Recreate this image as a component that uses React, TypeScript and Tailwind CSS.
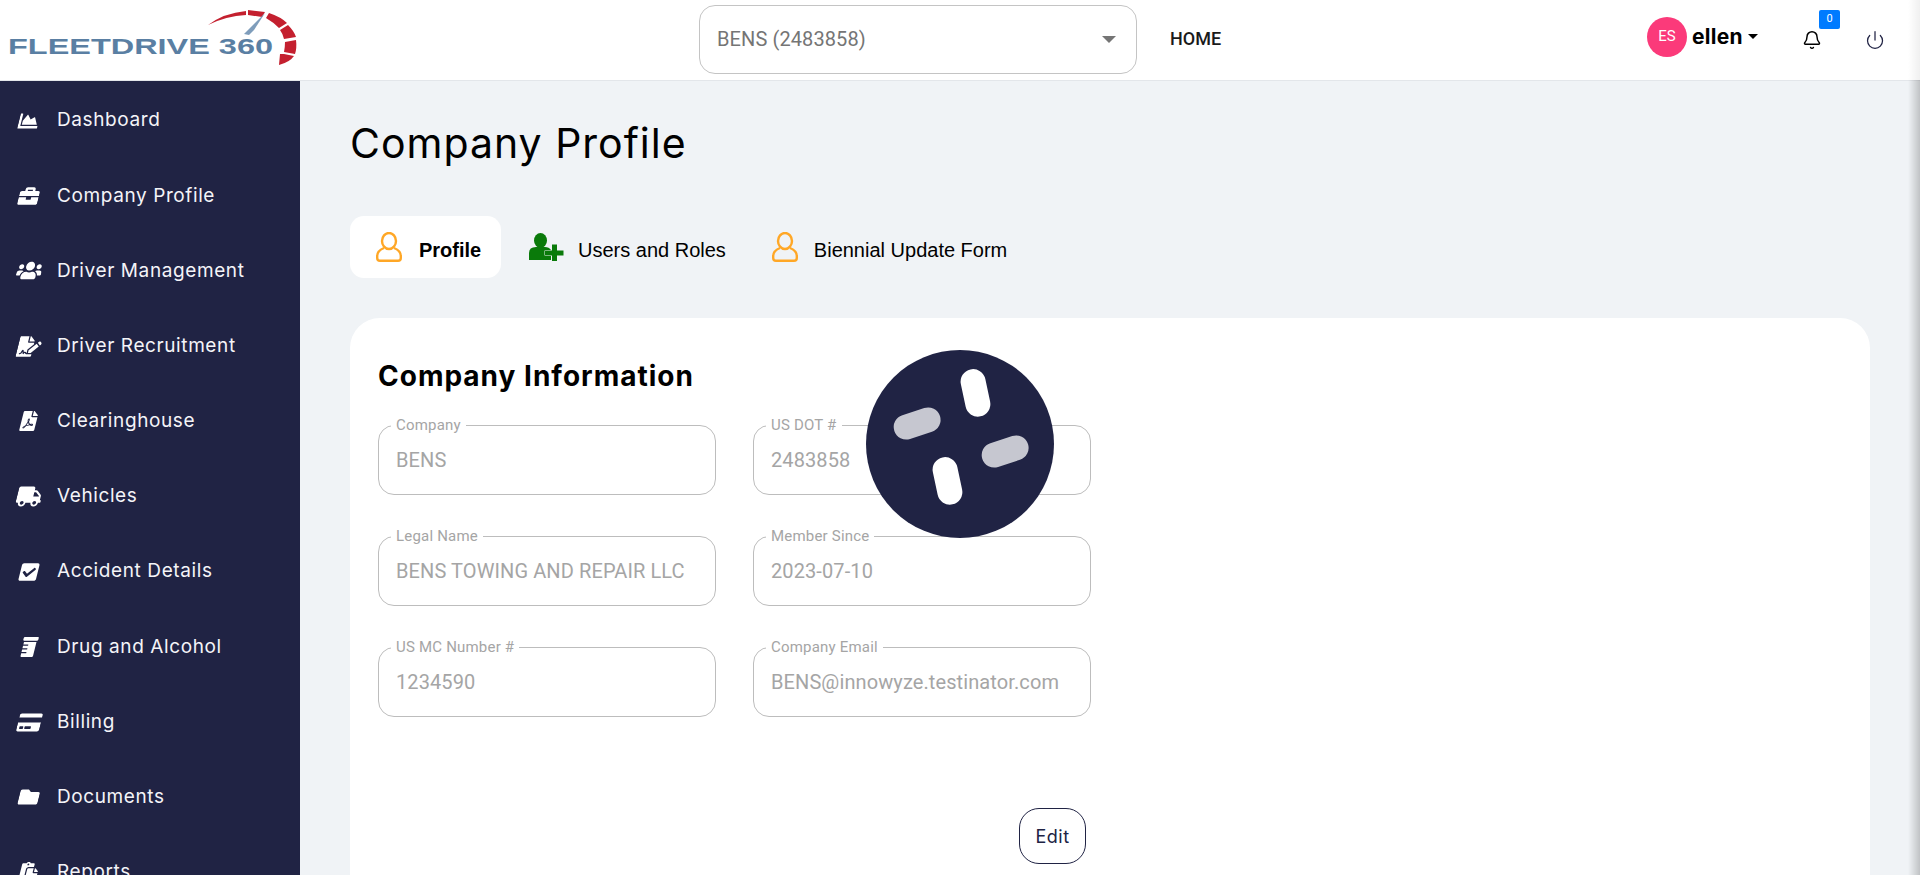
import { FaChartArea, FaBriefcase, FaUsers, FaFileSignature, FaFilePdf, FaTruck, FaCheckSquare, FaPrescriptionBottle, FaCreditCard, FaFolder, FaPaste } from "react-icons/fa";
import { Bell, Power } from "lucide-react";

// size: FontAwesome glyphs are fitted to the box, so wide ones need a bigger box
const navItems = [
  { label: "Dashboard", icon: FaChartArea, size: 20 },
  { label: "Company Profile", icon: FaBriefcase, size: 20 },
  { label: "Driver Management", icon: FaUsers, size: 25 },
  { label: "Driver Recruitment", icon: FaFileSignature, size: 23 },
  { label: "Clearinghouse", icon: FaFilePdf, size: 20 },
  { label: "Vehicles", icon: FaTruck, size: 25 },
  { label: "Accident Details", icon: FaCheckSquare, size: 20 },
  { label: "Drug and Alcohol", icon: FaPrescriptionBottle, size: 20 },
  { label: "Billing", icon: FaCreditCard, size: 23 },
  { label: "Documents", icon: FaFolder, size: 20 },
  { label: "Reports", icon: FaPaste, size: 20 },
];

const fields = [
  { label: "Company", value: "BENS" },
  { label: "US DOT #", value: "2483858" },
  { label: "Legal Name", value: "BENS TOWING AND REPAIR LLC" },
  { label: "Member Since", value: "2023-07-10" },
  { label: "US MC Number #", value: "1234590" },
  { label: "Company Email", value: "BENS@innowyze.testinator.com" },
];

function Logo() {
  return (
    <svg width="300" height="80" viewBox="0 0 300 80" className="shrink-0">
      <text x="8" y="54" textLength="265" lengthAdjust="spacingAndGlyphs" fontFamily="'Liberation Sans', sans-serif" fontWeight="700" fontSize="22" fill="#5a7fa3">
        FLEETDRIVE 360
      </text>
      <path d="M208 25 Q224 13 246 11 L246 15 Q226 16 208 25Z" fill="#c4202f" />
      <path d="M248 10 L265 12 L262 17 L248 15Z" fill="#c4202f" />
      <path d="M269 13 Q281 17 287 23 L279 28 Q273 22 266 18Z" fill="#c4202f" />
      <path d="M288 25 Q294 31 296 37 L284 39 Q283 34 280 30Z" fill="#c4202f" />
      <path d="M296 40 Q297 48 295 54 L284 52 Q285 47 285 42Z" fill="#c4202f" />
      <path d="M294 56 Q290 62 279 65 L280 54 L284 54Z" fill="#c4202f" />
      <path d="M244 34 L265 13 L254 30 L249 35Z" fill="#7f9dbb" />
    </svg>
  );
}

function PersonOutline() {
  return (
    <svg width="26" height="30" viewBox="0 0 26 30" fill="none" stroke="#ffa726" strokeWidth="2.4" className="shrink-0">
      <ellipse cx="13" cy="9" rx="7" ry="8" />
      <path d="M8 16 C3 18 1.2 20 1.2 24 V26 Q1.2 28.8 4 28.8 H22 Q24.8 28.8 24.8 26 V24 C24.8 20 23 18 18 16" />
    </svg>
  );
}

function PersonPlus() {
  return (
    <svg width="36" height="28" viewBox="0 0 36 28" fill="#0a7a0a" className="shrink-0">
      <ellipse cx="12.5" cy="7.5" rx="6.5" ry="7.5" />
      <path d="M1 27 V20 Q1 14 8 14 H17 Q21 14 23 17 V27 Z" />
      <path d="M17 17.5 H24 V11.5 H29 V17.5 H35.5 V22.5 H29 V28 H24 V22.5 H17 Z" stroke="#f0f3f6" strokeWidth="1" paintOrder="stroke" />
    </svg>
  );
}

function Spinner() {
  return (
    <svg width="188" height="188" viewBox="0 0 188 188" className="absolute left-[866px] top-[350px]">
      <circle cx="94" cy="94" r="94" fill="#202344" />
      <rect x="-12" y="-24" width="25" height="48" rx="12.5" fill="#fff" transform="translate(109 43) rotate(-12)" />
      <rect x="-12" y="-24" width="25" height="48" rx="12.5" fill="#fff" transform="translate(81 131) rotate(-12)" />
      <rect x="-24" y="-12" width="48" height="25" rx="12.5" fill="#c6c7d0" transform="translate(51 73) rotate(-18)" />
      <rect x="-24" y="-12" width="48" height="25" rx="12.5" fill="#c6c7d0" transform="translate(139 101) rotate(-18)" />
    </svg>
  );
}

export default function App() {
  return (
    <div className="relative h-[875px] overflow-hidden bg-[#f0f3f6] font-['Inter',sans-serif]">
      <header className="flex h-[81px] items-center border-b border-[#e3e6ea] bg-white">
        <Logo />
        <div className="mb-[2px] ml-[399px] flex h-[69px] w-[438px] items-center justify-between rounded-[16px] border border-[#c4c4c4] pl-[17px] pr-[20px] font-['Roboto',sans-serif] text-[20px] tracking-[0.1px] text-[#757575]">
          <span>BENS (2483858)</span>
          <span className="h-0 w-0 border-x-[7px] border-t-[7px] border-x-transparent border-t-[#757575]" />
        </div>
        <span className="mb-[4px] ml-[33px] font-['Roboto',sans-serif] text-[18px] font-medium text-[#1a1a1a]">HOME</span>
        <div className="ml-auto flex items-center pr-[35px]">
          <div className="mb-[7px] flex items-center">
            <span className="flex h-[40px] w-[40px] items-center justify-center rounded-full bg-[#fb3a7a] font-['Roboto',sans-serif] text-[15px] text-white">ES</span>
            <span className="ml-[5px] text-[21px] font-bold tracking-[0.3px] text-black">ellen</span>
            <span className="ml-[5px] h-0 w-0 border-x-[5px] border-t-[5px] border-x-transparent border-t-black" />
          </div>
          <div className="relative ml-[44px]">
            <Bell size={20} strokeWidth={1.75} className="text-black" />
            <span className="absolute -top-[20px] left-[17px] flex h-[19px] w-[21px] items-center justify-center rounded-[2px] bg-[#007bff] font-['Roboto',sans-serif] text-[11px] text-white">0</span>
          </div>
          <Power size={20} strokeWidth={1.5} className="ml-[43px] text-[#202344]" />
        </div>
      </header>

      <div className="flex">
        <aside className="h-[794px] w-[300px] shrink-0 overflow-hidden bg-[#202344] pt-[2px] text-white">
          {navItems.map((item) => (
            <div key={item.label} className="flex h-[75.2px] items-center pl-[17px]">
              <span className="mr-[16px] flex w-[24px] shrink-0 justify-center">
                <item.icon size={item.size} className="shrink-0 skew-x-[-14deg]" />
              </span>
              <span className="text-[19px] tracking-[0.6px] text-[#f4f4f8]">{item.label}</span>
            </div>
          ))}
        </aside>

        <main className="min-w-0 flex-1 px-[50px]">
          <h1 className="mt-[38px] text-[41px] leading-[48px] tracking-[1px] text-black">Company Profile</h1>
          <div className="mt-[49px] flex h-[62px] items-center font-['Liberation_Sans',sans-serif] text-[20px] text-black">
            <div className="flex h-[62px] w-[151px] items-center gap-[17px] rounded-[14px] bg-white pl-[26px] font-bold">
              <PersonOutline />
              <span className="pt-[6px]">Profile</span>
            </div>
            <div className="ml-[27px] flex items-center gap-[14px]">
              <PersonPlus />
              <span className="pt-[6px]">Users and Roles</span>
            </div>
            <div className="ml-[46px] flex items-center gap-[16px]">
              <PersonOutline />
              <span className="pt-[6px]">Biennial Update Form</span>
            </div>
          </div>

          <section className="mt-[40px] h-[600px] rounded-[30px] bg-white pl-[28px] pt-[40px]">
            <h2 className="text-[28px] leading-[36px] font-bold tracking-[1px] text-black">Company Information</h2>
            <div className="mt-[31px] grid w-[713px] grid-cols-[338px_338px] gap-x-[37px] gap-y-[41px]">
              {fields.map((field) => (
                <div key={field.label} className="relative flex h-[70px] items-center rounded-[16px] border border-[#bdbdbd] pl-[17px] font-['Roboto',sans-serif] text-[20px] tracking-[0.1px] text-[#a5a5a5]">
                  <span className="absolute -top-[9px] left-[12px] bg-white px-[5px] text-[15px] leading-[16px] tracking-[0.2px] text-[#a5a5a5]">{field.label}</span>
                  {field.value}
                </div>
              ))}
            </div>
            <div className="mt-[91px] pl-[641px]">
              <button className="h-[56px] w-[67px] rounded-[20px] border border-[#202344] text-[18px] tracking-[0.5px] text-[#202344]">Edit</button>
            </div>
          </section>
        </main>
      </div>

      <Spinner />
      {/* shadow coming in from the right edge */}
      <div className="absolute right-0 top-0 h-[80px] w-[12px] bg-linear-to-r from-transparent to-black/[0.06]" />
      <div className="absolute bottom-0 right-0 top-[80px] w-[12px] bg-linear-to-r from-transparent to-black/20" />
    </div>
  );
}
